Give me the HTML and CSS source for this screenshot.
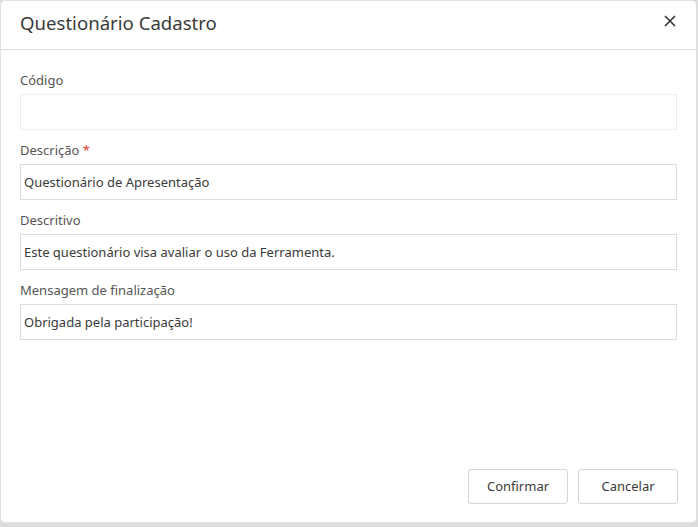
FILE: index.html
```html
<!DOCTYPE html>
<html lang="pt">
<head>
<meta charset="utf-8">
<link rel="stylesheet" href="styles.css">
</head>
<body>
<div class="modal">
  <div class="modal-header">
    <h1 class="modal-title">Questionário Cadastro</h1>
    <button class="close" aria-label="Fechar">
      <svg width="12" height="12" viewBox="0 0 12 12"><path d="M1 1L11 11M11 1L1 11" stroke="#333" stroke-width="1.6" fill="none"/></svg>
    </button>
  </div>
  <div class="modal-body">
    <div class="field">
      <label class="label">Código</label>
      <div class="input input-disabled"></div>
    </div>
    <div class="field">
      <label class="label">Descrição <span class="req">*</span></label>
      <div class="input">Questionário de Apresentação</div>
    </div>
    <div class="field">
      <label class="label">Descritivo</label>
      <div class="input">Este questionário visa avaliar o uso da Ferramenta.</div>
    </div>
    <div class="field">
      <label class="label">Mensagem de finalização</label>
      <div class="input">Obrigada pela participação!</div>
    </div>
  </div>
  <div class="modal-footer">
    <button class="btn">Confirmar</button>
    <button class="btn">Cancelar</button>
  </div>
</div>
</body>
</html>
```
FILE: styles.css
```css
html, body {
  margin: 0;
  padding: 0;
}
body {
  background: #dcdcdc;
  width: 698px;
  height: 527px;
  overflow: hidden;
  font-family: "Noto Sans", "Open Sans", sans-serif;
  color: #333;
}
.modal {
  box-sizing: border-box;
  width: 697px;
  height: 523px;
  background: #fff;
  border: 1px solid #e2e2e2;
  border-radius: 5px;
  display: flex;
  flex-direction: column;
}
.modal-header {
  height: 48px;
  border-bottom: 1px solid #dedede;
  display: flex;
  align-items: center;
  justify-content: space-between;
  padding: 0 19px;
}
.modal-title {
  margin: 0;
  font-size: 18.6px;
  font-weight: 400;
  color: #3a3a3a;
  margin-top: -6px;
}
.close {
  border: 0;
  background: none;
  padding: 0;
  width: 12px;
  height: 12px;
  margin-right: 1px;
  margin-top: -9px;
  display: flex;
}
.modal-body {
  flex: 1;
  padding: 20px 19px 0;
  display: flex;
  flex-direction: column;
  gap: 10px;
}
.field {
  display: flex;
  flex-direction: column;
  gap: 4px;
}
.label {
  font-size: 13px;
  line-height: 20px;
  color: #555;
}
.req {
  color: #e53935;
}
.input {
  box-sizing: border-box;
  height: 36px;
  border: 1px solid #dcdcdc;
  padding: 0 3px;
  font-size: 13px;
  line-height: 35px;
  color: #3a3a3a;
  white-space: nowrap;
}
.input-disabled {
  border-color: #ededed;
}
.modal-footer {
  display: flex;
  justify-content: flex-end;
  gap: 10px;
  padding: 0 18px 18px;
}
.btn {
  box-sizing: border-box;
  width: 100px;
  height: 35px;
  background: #fff;
  border: 1px solid #d6d6d6;
  border-radius: 3px;
  font-family: "Noto Sans", "Open Sans", sans-serif;
  font-size: 13px;
  line-height: 33px;
  color: #3a3a3a;
  padding: 0;
}
```
